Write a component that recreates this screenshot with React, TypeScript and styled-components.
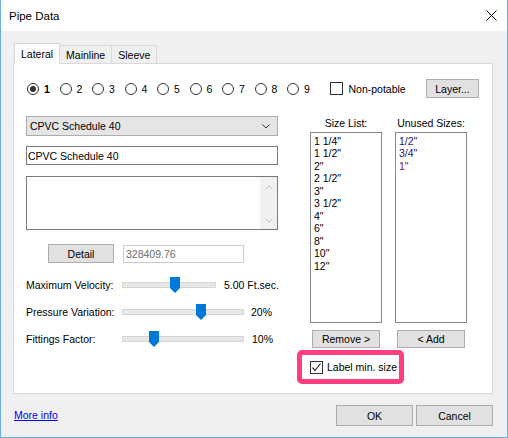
import React from "react";
import styled, { createGlobalStyle } from "styled-components";

const GlobalStyle = createGlobalStyle`
  html, body {
    margin: 0;
    padding: 0;
    background: #ffffff;
  }
  * {
    box-sizing: border-box;
  }
`;

const Window = styled.div`
  width: 508px;
  height: 438px;
  display: flex;
  flex-direction: column;
  background: #f0f0f0;
  border: 1px solid #6aaef0;
  border-top: none;
  font-family: "Liberation Sans", Arial, sans-serif;
  font-size: 10.5px;
  color: #000;
`;

const TitleBar = styled.div`
  height: 31px;
  display: flex;
  align-items: center;
  justify-content: space-between;
  background: #ffffff;
  padding-left: 8px;
`;

const Title = styled.span`
  font-size: 11.5px;
  color: #000;
`;

const CloseButton = styled.div`
  width: 32px;
  height: 31px;
  display: flex;
  align-items: center;
  justify-content: center;
`;

const Body = styled.div`
  flex: 1;
  display: flex;
  flex-direction: column;
  padding: 12px 14px 0 12px;
`;

const TabStrip = styled.div`
  display: flex;
  align-items: flex-end;
  height: 21px;
  margin-left: 1px;
  margin-bottom: -1px;
  position: relative;
  z-index: 1;
`;

const Tab = styled.div<{ $active?: boolean }>`
  height: ${(p) => (p.$active ? "21px" : "18px")};
  margin-bottom: ${(p) => (p.$active ? "0" : "1px")};
  margin-left: ${(p) => (p.$active ? "0" : "-1px")};
  padding: 0 6px;
  display: flex;
  align-items: center;
  background: ${(p) => (p.$active ? "#ffffff" : "#f0f0f0")};
  border: 1px solid #d9d9d9;
  border-bottom: ${(p) => (p.$active ? "1px solid #ffffff" : "none")};
  padding-top: ${(p) => (p.$active ? "0" : "1px")};
  &:first-child {
    margin-left: 0;
  }
`;

const Panel = styled.div`
  height: 331px;
  background: #ffffff;
  border: 1px solid #d9d9d9;
  padding: 15px 13px 0 12px;
`;

const RadioRow = styled.div`
  display: flex;
  align-items: center;
  height: 19px;
  padding-left: 1px;
`;

const RadioItem = styled.label`
  width: 32.5px;
  display: flex;
  align-items: center;
  gap: 5px;
`;

const RadioCircle = styled.span<{ $checked?: boolean }>`
  width: 12px;
  height: 12px;
  border-radius: 50%;
  border: 1px solid #333333;
  background: #ffffff;
  display: flex;
  align-items: center;
  justify-content: center;
  &::after {
    content: "";
    width: 6px;
    height: 6px;
    border-radius: 50%;
    background: ${(p) => (p.$checked ? "#333333" : "transparent")};
  }
`;

const RadioText = styled.span<{ $bold?: boolean }>`
  font-weight: ${(p) => (p.$bold ? "bold" : "normal")};
`;

const CheckItem = styled.label<{ $gap?: number; $offset?: number }>`
  display: flex;
  align-items: center;
  gap: ${(p) => p.$gap ?? 6}px;
  margin-left: ${(p) => p.$offset ?? 0}px;
`;

const CheckBox = styled.span`
  width: 13px;
  height: 13px;
  border: 1px solid #333333;
  background: #ffffff;
  display: flex;
  align-items: center;
  justify-content: center;
`;

const Button = styled.div<{ $w: number; $h: number }>`
  width: ${(p) => p.$w}px;
  height: ${(p) => p.$h}px;
  background: #e1e1e1;
  border: 1px solid #adadad;
  display: flex;
  align-items: center;
  justify-content: center;
`;

const LayerButton = styled(Button)`
  margin-left: auto;
`;

const MainGrid = styled.div`
  display: grid;
  grid-template-columns: 252px 1fr;
  column-gap: 32px;
  margin-top: 18px;
`;

const LeftColumn = styled.div`
  display: flex;
  flex-direction: column;
`;

const Dropdown = styled.div`
  height: 20px;
  background: #e5e5e5;
  border: 1px solid #adadad;
  display: flex;
  align-items: center;
  justify-content: space-between;
  padding: 0 7px 0 3px;
  margin-bottom: 10px;
`;

const TextBox = styled.div`
  height: 19px;
  border: 1px solid #7a7a7a;
  display: flex;
  align-items: center;
  padding-left: 1px;
  margin-bottom: 11px;
`;

const TextArea = styled.div`
  height: 54px;
  border: 1px solid #7a7a7a;
  display: flex;
  justify-content: flex-end;
  margin-bottom: 14px;
`;

const ScrollBar = styled.div`
  width: 17px;
  background: #f0f0f0;
  display: flex;
  flex-direction: column;
  justify-content: space-between;
  align-items: center;
  padding: 8px 0 6px;
`;

const DetailRow = styled.div`
  display: flex;
  align-items: center;
  gap: 9px;
  padding-left: 22px;
  margin-bottom: 8px;
`;

const ReadOnlyField = styled.div`
  width: 121px;
  height: 18px;
  border: 1px solid #cccccc;
  color: #6d6d6d;
  display: flex;
  align-items: center;
  padding-left: 2px;
`;

const SliderRow = styled.div`
  height: 27px;
  display: flex;
  align-items: center;
  white-space: nowrap;
`;

const SliderLabel = styled.span`
  width: 96px;
  flex-shrink: 0;
`;

const Track = styled.div<{ $w: number }>`
  width: ${(p) => p.$w}px;
  flex-shrink: 0;
  height: 18px;
  position: relative;
  &::before {
    content: "";
    position: absolute;
    left: 0;
    right: 0;
    top: 6px;
    height: 4px;
    background: #e7e7e7;
    border: 1px solid #d6d6d6;
  }
`;

const Thumb = styled.svg`
  position: absolute;
  top: 1px;
`;

const SliderValue = styled.span<{ $gap: number }>`
  margin-left: ${(p) => p.$gap}px;
  white-space: nowrap;
`;

const RightColumn = styled.div`
  display: flex;
  flex-direction: column;
`;

const ListsRow = styled.div`
  display: flex;
  gap: 13px;
`;

const ListColumn = styled.div`
  width: 72px;
  display: flex;
  flex-direction: column;
  align-items: center;
`;

const ListLabel = styled.span`
  line-height: 14px;
  margin-bottom: 2px;
  white-space: nowrap;
`;

const ListBox = styled.div`
  width: 72px;
  height: 191px;
  border: 1px solid #828790;
  padding: 1.5px 0 0 3px;
  display: flex;
  flex-direction: column;
`;

const ListItem = styled.span<{ $color?: string }>`
  line-height: 12.5px;
  color: ${(p) => p.$color || "#000"};
`;

const ListButtons = styled.div`
  display: flex;
  gap: 17px;
  margin: 7px 0 0 2px;
`;

const Highlight = styled.div`
  width: 107px;
  height: 34px;
  margin: 2px 0 0 -13px;
  border: 5px solid #ff3d7f;
  border-radius: 5px;
  background: #ffffff;
  display: flex;
  align-items: center;
  padding-left: 8px;
`;

const Footer = styled.div`
  display: flex;
  align-items: center;
  justify-content: space-between;
  padding-top: 11px;
  padding-left: 1px;
`;

const Link = styled.a`
  color: #0000ff;
  text-decoration: underline;
  margin-top: -2px;
`;

const FooterButtons = styled.div`
  display: flex;
  gap: 3px;
`;

const Chevron = ({ up, color }: { up?: boolean; color: string }) => (
  <svg width="8" height="5" viewBox="0 0 8 5">
    <polyline
      points={up ? "0.5,4.5 4,1 7.5,4.5" : "0.5,0.5 4,4 7.5,0.5"}
      fill="none"
      stroke={color}
      strokeWidth="1"
    />
  </svg>
);

const Slider = ({ width, pos }: { width: number; pos: number }) => (
  <Track $w={width}>
    <Thumb width="10" height="16" viewBox="0 0 10 16" style={{ left: pos }}>
      <path d="M0 0 H10 V11 L5 16 L0 11 Z" fill="#0078d7" />
    </Thumb>
  </Track>
);

const sizes = ['1 1/4"', '1 1/2"', '2"', '2 1/2"', '3"', '3 1/2"', '4"', '6"', '8"', '10"', '12"'];
const unused = [
  { label: '1/2"', color: "#2a1470" },
  { label: '3/4"', color: "#2a1470" },
  { label: '1"', color: "#7a0a7a" },
];

export default function App() {
  return (
    <>
      <GlobalStyle />
      <Window>
        <TitleBar>
          <Title>Pipe Data</Title>
          <CloseButton>
            <svg width="11" height="11" viewBox="0 0 11 11">
              <path d="M0.5 0.5 L10.5 10.5 M10.5 0.5 L0.5 10.5" stroke="#000" strokeWidth="1" />
            </svg>
          </CloseButton>
        </TitleBar>
        <Body>
          <TabStrip>
            <Tab $active>Lateral</Tab>
            <Tab>Mainline</Tab>
            <Tab>Sleeve</Tab>
          </TabStrip>
          <Panel>
            <RadioRow>
              {[1, 2, 3, 4, 5, 6, 7, 8, 9].map((n) => (
                <RadioItem key={n}>
                  <RadioCircle $checked={n === 1} />
                  <RadioText $bold={n === 1}>{n}</RadioText>
                </RadioItem>
              ))}
              <CheckItem $offset={10}>
                <CheckBox />
                <span>Non-potable</span>
              </CheckItem>
              <LayerButton $w={53} $h={19}>Layer...</LayerButton>
            </RadioRow>
            <MainGrid>
              <LeftColumn>
                <Dropdown>
                  <span>CPVC Schedule 40</span>
                  <Chevron color="#333" />
                </Dropdown>
                <TextBox>CPVC Schedule 40</TextBox>
                <TextArea>
                  <ScrollBar>
                    <Chevron up color="#c2c2c2" />
                    <Chevron color="#c2c2c2" />
                  </ScrollBar>
                </TextArea>
                <DetailRow>
                  <Button $w={66} $h={19}>Detail</Button>
                  <ReadOnlyField>328409.76</ReadOnlyField>
                </DetailRow>
                <SliderRow>
                  <SliderLabel>Maximum Velocity:</SliderLabel>
                  <Slider width={94} pos={48} />
                  <SliderValue $gap={8}>5.00 Ft.sec.</SliderValue>
                </SliderRow>
                <SliderRow>
                  <SliderLabel>Pressure Variation:</SliderLabel>
                  <Slider width={122} pos={74} />
                  <SliderValue $gap={7}>20%</SliderValue>
                </SliderRow>
                <SliderRow>
                  <SliderLabel>Fittings Factor:</SliderLabel>
                  <Slider width={122} pos={27} />
                  <SliderValue $gap={8}>10%</SliderValue>
                </SliderRow>
              </LeftColumn>
              <RightColumn>
                <ListsRow>
                  <ListColumn>
                    <ListLabel>Size List:</ListLabel>
                    <ListBox>
                      {sizes.map((s) => (
                        <ListItem key={s}>{s}</ListItem>
                      ))}
                    </ListBox>
                  </ListColumn>
                  <ListColumn>
                    <ListLabel>Unused Sizes:</ListLabel>
                    <ListBox>
                      {unused.map((u) => (
                        <ListItem key={u.label} $color={u.color}>{u.label}</ListItem>
                      ))}
                    </ListBox>
                  </ListColumn>
                </ListsRow>
                <ListButtons>
                  <Button $w={68} $h={18}>Remove &gt;</Button>
                  <Button $w={68} $h={18}>&lt; Add</Button>
                </ListButtons>
                <Highlight>
                  <CheckItem $gap={4}>
                    <CheckBox>
                      <svg width="11" height="11" viewBox="0 0 11 11">
                        <polyline points="1.5,5.5 4,8.5 9.5,1.5" fill="none" stroke="#333" strokeWidth="1.2" />
                      </svg>
                    </CheckBox>
                    <span>Label min. size</span>
                  </CheckItem>
                </Highlight>
              </RightColumn>
            </MainGrid>
          </Panel>
          <Footer>
            <Link href="#">More info</Link>
            <FooterButtons>
              <Button $w={77} $h={21}>OK</Button>
              <Button $w={77} $h={21}>Cancel</Button>
            </FooterButtons>
          </Footer>
        </Body>
      </Window>
    </>
  );
}
